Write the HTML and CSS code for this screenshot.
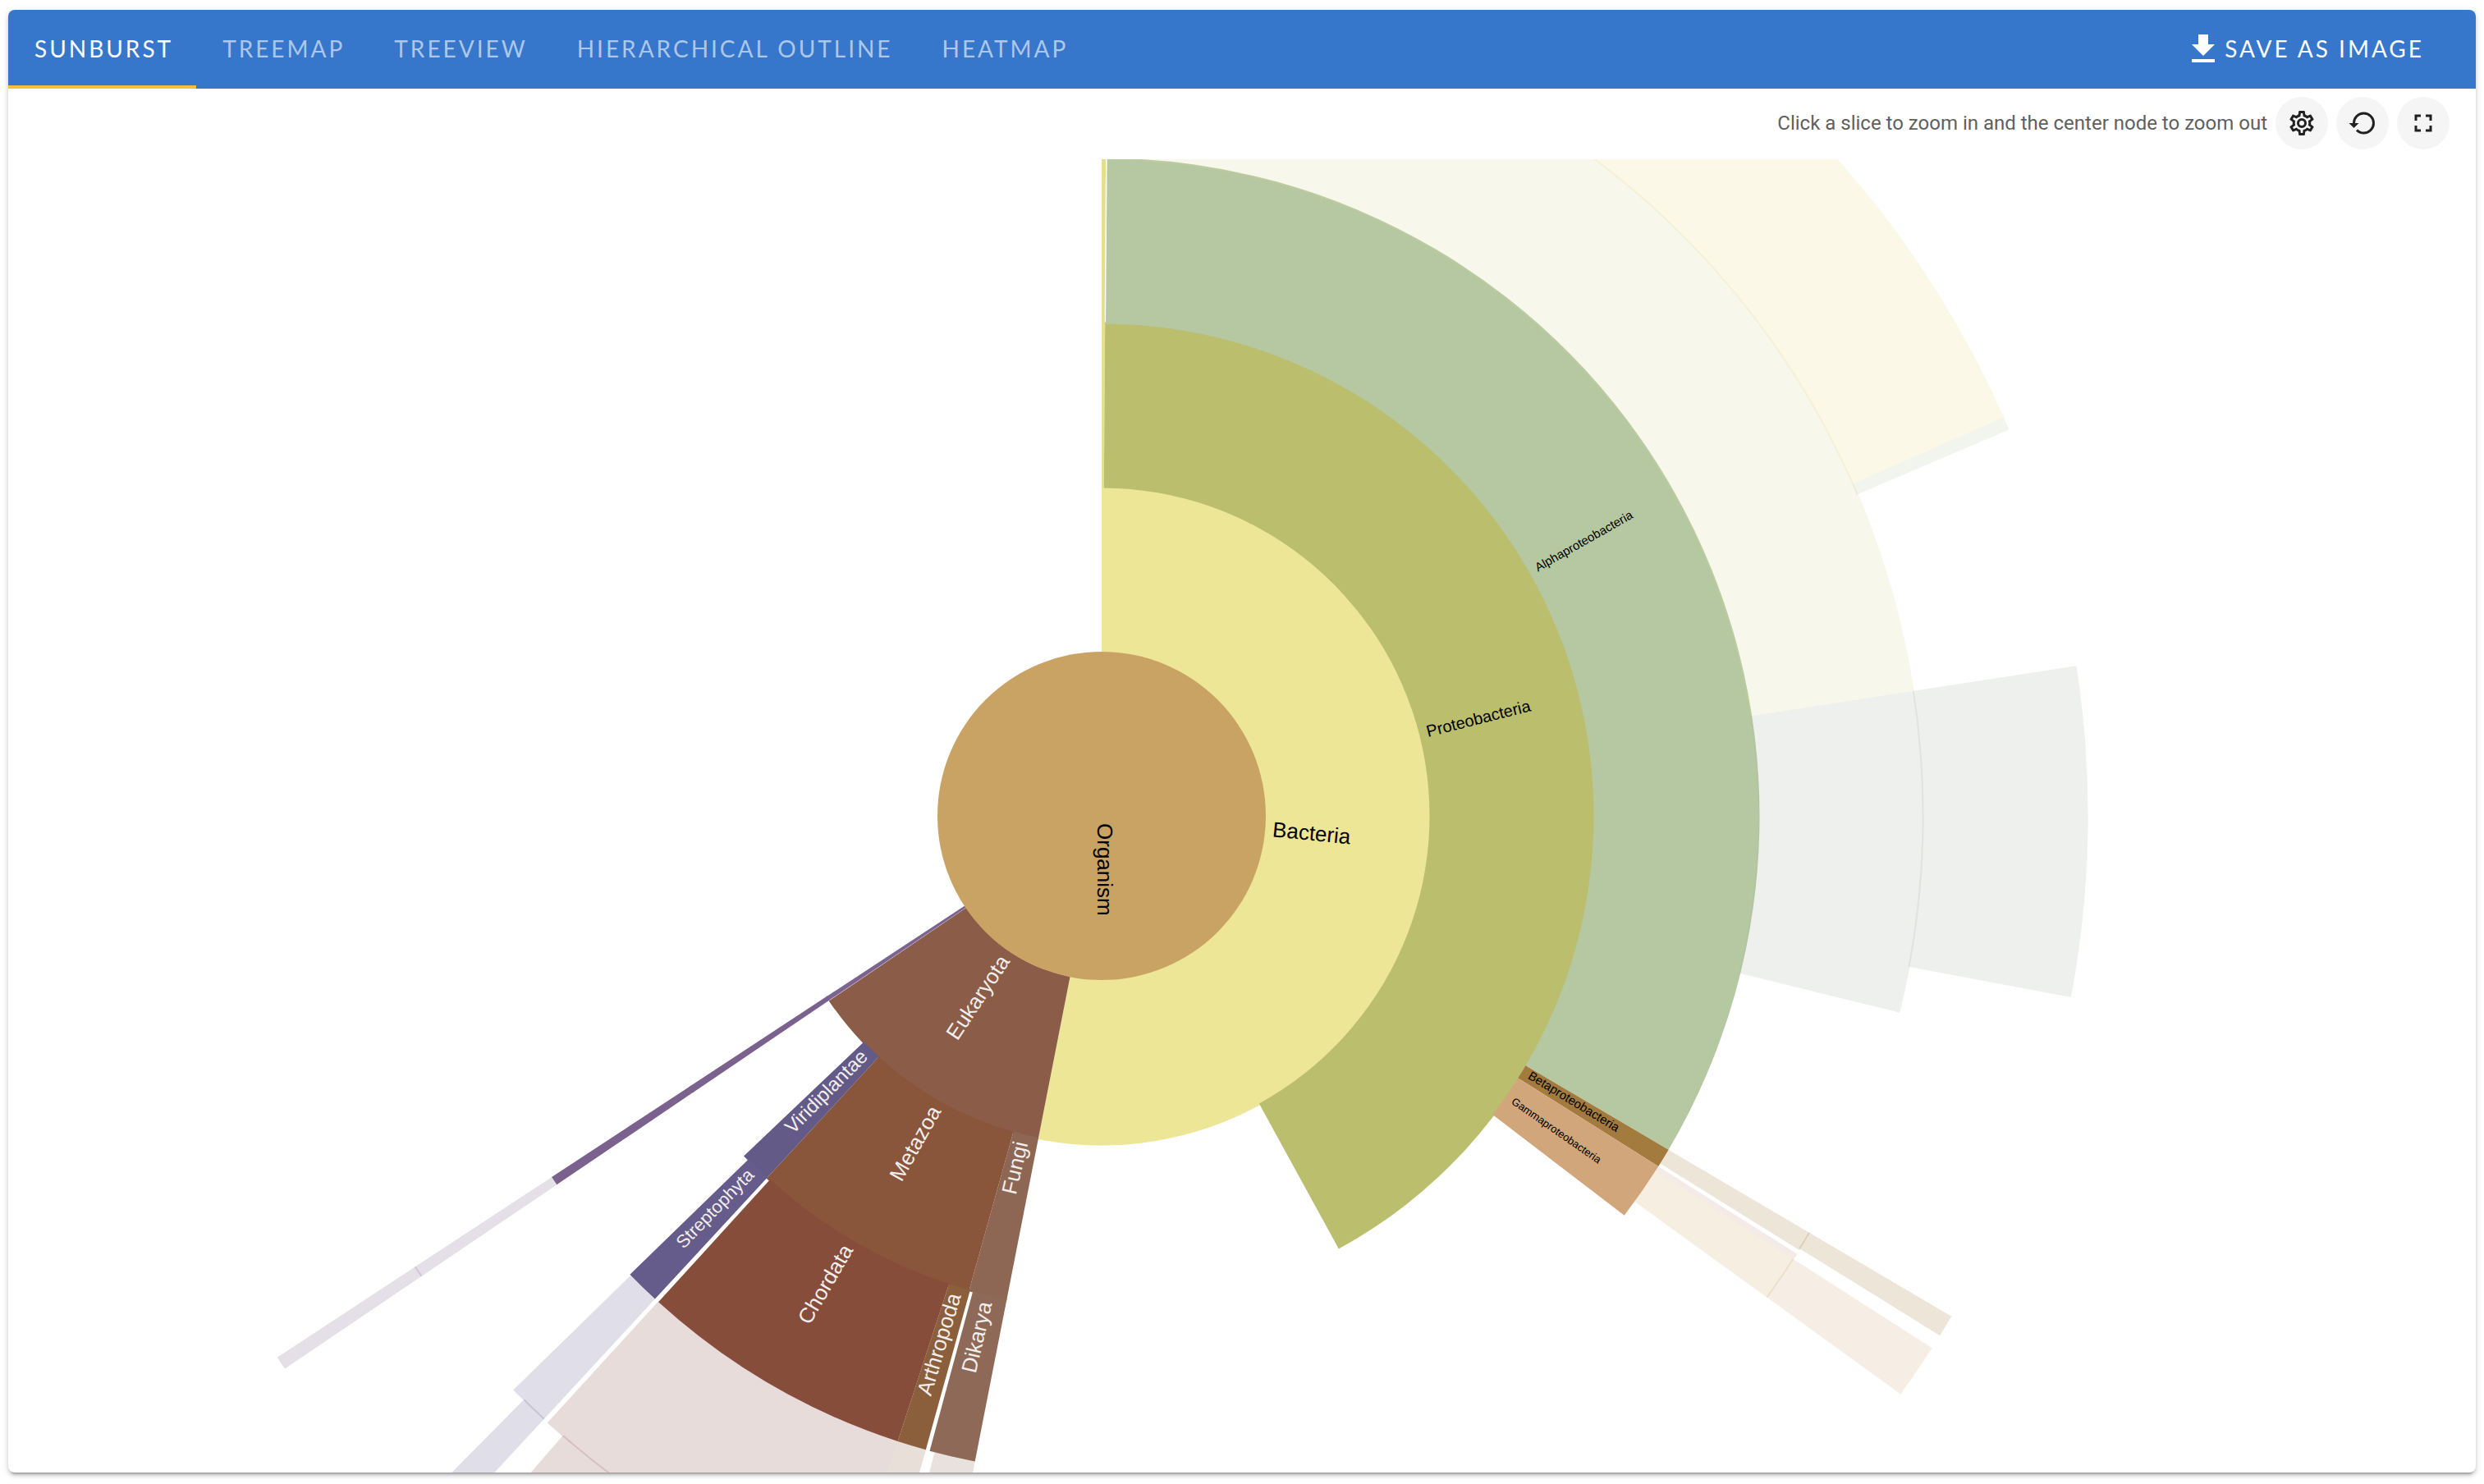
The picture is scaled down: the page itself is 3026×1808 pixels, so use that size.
FILE: index.html
```html
<!DOCTYPE html>
<html lang="en">
<head>
<meta charset="utf-8">
<title>Taxonomy visualizations</title>
<link rel="stylesheet" href="styles.css">
</head>
<body>
<main class="card">
  <header class="header">
    <nav class="tabs">
      <a class="tab tab-active" href="#sunburst" aria-current="page">Sunburst</a>
      <a class="tab" href="#treemap">Treemap</a>
      <a class="tab" href="#treeview">Treeview</a>
      <a class="tab" href="#outline">Hierarchical outline</a>
      <a class="tab" href="#heatmap">Heatmap</a>
    </nav>
    <button class="save" type="button">
      <svg class="save-icon" viewBox="0 0 24 24" aria-hidden="true"><path d="M5,20H19V18H5M19,9H15V3H9V9H5L12,16L19,9Z"/></svg>
      <span class="save-text">Save as image</span>
    </button>
  </header>
  <div class="toolbar">
    <span class="hint">Click a slice to zoom in and the center node to zoom out</span>
    <button class="round" type="button" aria-label="Settings">
      <svg class="round-icon" viewBox="0 0 24 24" aria-hidden="true"><path d="M12,8A4,4 0 0,1 16,12A4,4 0 0,1 12,16A4,4 0 0,1 8,12A4,4 0 0,1 12,8M12,10A2,2 0 0,0 10,12A2,2 0 0,0 12,14A2,2 0 0,0 14,12A2,2 0 0,0 12,10M10,22C9.75,22 9.54,21.82 9.5,21.58L9.13,18.93C8.5,18.68 7.96,18.34 7.44,17.94L4.95,18.95C4.73,19.03 4.46,18.95 4.34,18.73L2.34,15.27C2.21,15.05 2.27,14.78 2.46,14.63L4.57,12.97L4.5,12L4.57,11L2.46,9.37C2.27,9.22 2.21,8.95 2.34,8.73L4.34,5.27C4.46,5.05 4.73,4.96 4.95,5.05L7.44,6.05C7.96,5.66 8.5,5.32 9.13,5.07L9.5,2.42C9.54,2.18 9.75,2 10,2H14C14.25,2 14.46,2.18 14.5,2.42L14.87,5.07C15.5,5.32 16.04,5.66 16.56,6.05L19.05,5.05C19.27,4.96 19.54,5.05 19.66,5.27L21.66,8.73C21.79,8.95 21.73,9.22 21.54,9.37L19.43,11L19.5,12L19.43,13L21.54,14.63C21.73,14.78 21.79,15.05 21.66,15.27L19.66,18.73C19.54,18.95 19.27,19.04 19.05,18.95L16.56,17.95C16.04,18.34 15.5,18.68 14.87,18.93L14.5,21.58C14.46,21.82 14.25,22 14,22H10M11.25,4L10.88,6.61C9.68,6.86 8.62,7.5 7.85,8.39L5.44,7.35L4.69,8.65L6.8,10.2C6.4,11.37 6.4,12.64 6.8,13.8L4.68,15.36L5.43,16.66L7.86,15.62C8.63,16.5 9.68,17.14 10.87,17.38L11.24,20H12.76L13.13,17.39C14.32,17.14 15.37,16.5 16.14,15.62L18.57,16.66L19.32,15.36L17.2,13.81C17.6,12.64 17.6,11.37 17.2,10.2L19.31,8.65L18.56,7.35L16.15,8.39C15.38,7.5 14.32,6.86 13.12,6.62L12.75,4H11.25Z"/></svg>
    </button>
    <button class="round" type="button" aria-label="Reset">
      <svg class="round-icon" viewBox="0 0 24 24" aria-hidden="true"><path d="M13,3A9,9 0 0,0 4,12H1L4.89,15.89L4.96,16.03L9,12H6A7,7 0 0,1 13,5A7,7 0 0,1 20,12A7,7 0 0,1 13,19C11.07,19 9.32,18.21 8.06,16.94L6.64,18.36C8.27,20 10.5,21 13,21A9,9 0 0,0 22,12A9,9 0 0,0 13,3Z"/></svg>
    </button>
    <button class="round" type="button" aria-label="Fullscreen">
      <svg class="round-icon" viewBox="0 0 24 24" aria-hidden="true"><path d="M5,5H10V7H7V10H5V5M14,5H19V10H17V7H14V5M17,14H19V19H14V17H17V14M10,17V19H5V14H7V17H10Z"/></svg>
    </button>
  </div>
  <svg class="chart" viewBox="0 0 3006 1600" role="img" aria-label="Sunburst of organisms">
    <g id="slices" transform="translate(1332 800)"></g>
    <g id="labels" transform="translate(1332 800)"></g>
  </svg>
</main>
<script src="chart.js"></script>
</body>
</html>
```
FILE: styles.css
```css
* {
  box-sizing: border-box;
}

body {
  margin: 0;
  padding: 12px 10px 14px;
  background: #fff;
  font-family: Roboto, "Liberation Sans", sans-serif;
}

.card {
  overflow: hidden;
  border-radius: 8px;
  background: #fff;
  box-shadow: 0 6px 2px -4px rgba(0, 0, 0, 0.2), 0 4px 4px rgba(0, 0, 0, 0.14), 0 2px 10px rgba(0, 0, 0, 0.12);
}

.header {
  display: flex;
  align-items: stretch;
  justify-content: space-between;
  height: 96px;
  padding-right: 63px;
  background: #3676cb;
}

.tabs {
  display: flex;
}

.tab {
  display: flex;
  align-items: center;
  padding: 2px 28px 0 32px;
  border-bottom: 4px solid transparent;
  color: rgba(255, 255, 255, 0.6);
  font: 400 28px/32px Lato, "Open Sans", sans-serif;
  letter-spacing: 3px;
  text-decoration: none;
  text-transform: uppercase;
}

.tab-active {
  border-bottom-color: #f9bd3c;
  color: #fff;
}

.save {
  display: flex;
  align-items: center;
  gap: 2px;
  padding: 0;
  border: 0;
  background: none;
  color: #fff;
  font: 400 28px/32px Lato, "Open Sans", sans-serif;
  letter-spacing: 3px;
  text-transform: uppercase;
}

.save-icon {
  width: 48px;
  height: 48px;
  fill: currentColor;
}

.save-text {
  padding-bottom: 2px;
}

.toolbar {
  display: flex;
  align-items: center;
  justify-content: flex-end;
  gap: 10px;
  height: 86px;
  padding: 0 32px 2px;
}

.hint {
  color: #5f5f5f;
  font-size: 24px;
  line-height: 32px;
}

.round {
  display: flex;
  align-items: center;
  justify-content: center;
  width: 64px;
  height: 64px;
  padding: 0;
  border: 0;
  border-radius: 50%;
  background: #f5f5f5;
}

.round-icon {
  width: 36px;
  height: 36px;
  fill: #212121;
}

.chart {
  display: block;
  width: 100%;
  height: auto;
}

.faded {
  opacity: 0.2;
}

.label {
  font-family: "Liberation Sans", Arial, sans-serif;
  text-rendering: geometricPrecision;
  fill: #000;
}

.label-light {
  fill: #f1eeec;
}
```
FILE: chart.js
```js
const RING = 200;
const NS = 'http://www.w3.org/2000/svg';

// Each slice: ring, start angle, end angle (degrees clockwise from the top), colour, label, text size
const slices = [
  [1, 0, 191.1, '#ede697', 'Bacteria', 26],
  [1, 191.1, 235.85, '#8b5d49', 'Eukaryota', 26],
  [1, 235.9, 236.7, '#7b6490'],

  [2, 0, 0.4, '#e6e08f'],
  [2, 0.4, 151.3, '#babe6d', 'Proteobacteria', 20],
  [2, 191.1, 195.6, '#8d6754', 'Fungi', 26],
  [2, 195.6, 222.75, '#8a563b', 'Metazoa', 26],
  [2, 222.75, 226.45, '#645a87', 'Viridiplantae', 24],
  [2, 235.9, 236.7, '#7b628e'],

  [3, 0, 0.36, '#e4df90'],
  [3, 0.48, 120.5, '#b6c8a2', 'Alphaproteobacteria', 15],
  [3, 120.5, 122.2, '#a37b3f', 'Betaproteobacteria', 15],
  [3, 122.2, 127.4, '#d1a67b', 'Gammaproteobacteria', 13],
  [3, 191.1, 195.15, '#8f6957', 'Dikarya', 26],
  [3, 195.5, 198.05, '#8b5f3b', 'Arthropoda', 26],
  [3, 198.05, 222.35, '#874d3b', 'Chordata', 26],
  [3, 222.75, 225.8, '#665c8b', 'Streptophyta', 22],
  [3, 235.9, 236.7, '#7b628e'],

  [4, 0.48, 81.25, '#d7d79b'],
  [4, 81.25, 103.85, '#aab2a6'],
  [4, 120.5, 121.9, '#a57d3c'],
  [4, 122.2, 122.65, '#c89b8c'],
  [4, 122.65, 125.9, '#d2aa69'],
  [4, 191.1, 194.7, '#8f6957'],
  [4, 195.5, 198.05, '#8b5f3b'],
  [4, 198.05, 222.4, '#8c5244'],
  [4, 222.75, 225.7, '#665c8b'],
  [4, 235.9, 236.7, '#7b628e'],

  [5, 0.48, 66.15, '#ecdb8c'],
  [5, 66.15, 66.95, '#bec8a8'],
  [5, 81.25, 100.6, '#aab2a6'],
  [5, 120.5, 121.8, '#a57d3c'],
  [5, 122.65, 125.9, '#d0a676'],
  [5, 198.05, 221, '#8c5244'],
  [5, 222.75, 224.7, '#665c8b'],
  [5, 235.9, 236.7, '#7b628e']
];

function add(parentId, name, attributes, text) {
  const node = document.createElementNS(NS, name);
  Object.entries(attributes).forEach(([key, value]) => node.setAttribute(key, value));
  if (text) node.textContent = text;
  document.getElementById(parentId).append(node);
}

function point(radius, degrees) {
  const a = degrees * Math.PI / 180;
  return (radius * Math.sin(a)).toFixed(2) + ' ' + (-radius * Math.cos(a)).toFixed(2);
}

function arc(ring, start, end) {
  const inner = ring * RING - 0.5;
  const outer = (ring + 1) * RING + 1.5;
  const large = end - start > 180 ? 1 : 0;
  return `M${point(outer, start)}A${outer} ${outer} 0 ${large} 1 ${point(outer, end)}` +
    `L${point(inner, end)}A${inner} ${inner} 0 ${large} 0 ${point(inner, start)}Z`;
}

function label(ring, angle, text, size) {
  const left = angle > 180;
  const offset = ring * RING + 9;
  add('labels', 'text', {
    class: left ? 'label label-light' : 'label',
    'font-size': size,
    'text-anchor': left ? 'end' : 'start',
    transform: `rotate(${left ? angle - 270 : angle - 90})`,
    x: left ? -offset : offset,
    y: Math.round(size * 0.2)
  }, text);
}

slices.forEach(([ring, start, end, color, text, size]) => {
  add('slices', 'path', { class: ring > 3 ? 'faded' : 'slice', d: arc(ring, start, end), fill: color });
  if (text) label(ring, (start + end) / 2, text, size);
});

add('slices', 'circle', { r: RING, fill: '#c9a363' });
label(0, 180, 'Organism', 26);
```
